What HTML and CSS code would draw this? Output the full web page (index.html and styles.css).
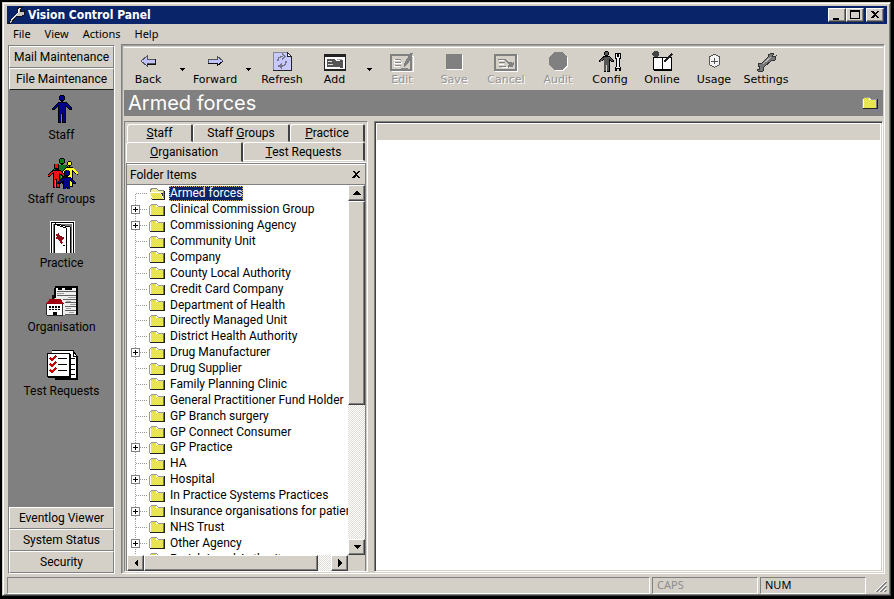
FILE: index.html
```html
<!DOCTYPE html>
<html lang="en">
<head>
<meta charset="utf-8">
<title>Vision Control Panel</title>
<link rel="stylesheet" href="styles.css">
</head>
<body>
<svg class="defs" width="0" height="0" aria-hidden="true">
  <defs>
    <pattern id="dither" width="2" height="2" patternUnits="userSpaceOnUse">
      <rect width="2" height="2" fill="#e3df45"/><rect width="1" height="1" fill="#ecea60"/><rect x="1" y="1" width="1" height="1" fill="#ecea60"/>
    </pattern>
    <symbol id="folder" viewBox="0 0 18 14">
      <path d="M1 12V3l2-2h5l2 2h6v9z" fill="#999"/>
      <path d="M2 12V3l1-1h5l2 2h6v8z" fill="#fff"/>
      <path d="M3 12V4h12v8z" fill="url(#dither)"/><path d="M3 2h5v2H3z" fill="#e3df45"/>
      <path d="M16 3h1v10H2v-1h14z" fill="#222"/><path d="M15 4h1v8h-1z" fill="#777"/>
    </symbol>
    <symbol id="folder-open" viewBox="0 0 18 14">
      <path d="M2 8V2l2-1h4l2 2h6v10H4z" fill="#888"/>
      <path d="M3 8V3l1-1h4l2 2h5v5z" fill="#f0eea0"/>
      <path d="M0 5h12l4 7H4z" fill="#fff"/><path d="M2 6h10l3 6H5z" fill="url(#dither)"/>
      <path d="M16 4h1v9H4v-1h12z" fill="#222"/><path d="M13 6h2v4z" fill="#333"/>
    </symbol>
    <symbol id="person" viewBox="0 0 20 28">
      <path d="M8 0h4v1h1v4h-1v1h-1v1h3l6 6v2h-2l-4-3v16h-4v-9h-1v9H6V12l-4 3H0v-2l6-6h3V6H8V5H7V1h1z" fill="#000"/>
      <path d="M8 1h4v4H8zM7 8h7l5 5v1h-1l-5-4v17h-2v-9H9v9H7V10l-5 4H1v-1z" fill="currentColor"/>
    </symbol>
  </defs>
</svg>
<div class="window">
  <header class="title-bar">
    <svg class="app-icon" viewBox="0 0 18 18"><path d="m2 15 7-7V3l3-2h3l-3 3 1 2 4-1-1 4-4 2-3-1-6 7H1z" fill="#c8c8c0" stroke="#111"/><path d="m3 14 7-7V4l2-2" fill="none" stroke="#fff"/></svg>
    <h1>Vision Control Panel</h1>
    <button class="raised caption" aria-label="Minimise"><svg viewBox="0 0 14 12"><path d="M3 9h6v2H3z"/></svg></button>
    <button class="raised caption" aria-label="Maximise"><svg viewBox="0 0 14 12"><path fill-rule="evenodd" d="M2 1h10v9H2zM3 3v6h8V3z"/></svg></button>
    <button class="raised caption close" aria-label="Close"><svg viewBox="0 0 14 12"><path d="M3 2h2l2 2 2-2h2L8 5.500 11 9H9L7 7 5 9H3l3-3.500z"/></svg></button>
  </header>
  <nav class="menu"><button>File</button><button>View</button><button>Actions</button><button>Help</button></nav>
  <div class="body">
    <aside class="outlook">
      <button class="group">Mail Maintenance</button>
      <button class="group open">File Maintenance</button>
      <div class="shortcuts">
        <button><svg class="big navy" viewBox="0 0 32 32"><use href="#person" x="6" y="2" width="20" height="28"/></svg>Staff</button>
        <button><svg class="big" viewBox="0 0 34 34">
          <use href="#person" class="green" x="7" y="1" width="20" height="28"/>
          <use href="#person" class="yellow" x="15" y="4" width="20" height="28"/>
          <use href="#person" class="red" x="1" y="7" width="20" height="26"/>
          <use href="#person" class="navy" x="12" y="14" width="20" height="28"/></svg>Staff Groups</button>
        <button><svg class="big" viewBox="0 0 32 32"><path d="M4 32V0h25v32z" fill="#fff"/><path d="M5.500 32V1.500h22V32" fill="none" stroke="#000"/><path d="M7 32V3h19v29z" fill="#777"/><path d="M10 3l14 3v26h-3z" fill="#fff" stroke="#000"/><path d="M8 3l12 4v25H8z" fill="#fff" stroke="#000"/><path d="m10 13 3-1 1 3 4 1v2l-2 1 1 3-2 1-2-4-3-1v-2h1z" fill="#910c18"/><path d="M17 24h2v1h-2z"/></svg>Practice</button>
        <button><svg class="big" viewBox="0 0 34 32"><path d="M10 0h24v31H10z" fill="#eee"/><path d="M10 1h24M33 1v30M10 2v11M13 3h4m3 0h8" stroke="#000" stroke-width="2"/><path d="M12 6h20M12 10h20M18 14h14M20 18h12M20 22h12M20 26h12M20 30h12" stroke="#555"/><path d="M12 8h7M23 12h9M21 16h6M25 20h7M21 24h6M24 28h6" stroke="#999"/><path d="M1 18h17v13H1z" fill="#fff" stroke="#222"/><path d="M0 19l4-5h12l3 5z" fill="#a00010"/><path d="M6 10h2v4H6z" fill="#111"/><path d="M3 21h5v5H3zM10 21h5v5h-5zM7 28h5v3H7z"/><path d="M5.500 21v5M12.500 21v5M3 23.500h12" stroke="#fff"/></svg>Organisation</button>
        <button><svg class="big" viewBox="0 0 32 32"><path d="M6 1.500h21l4 6v23H9" fill="#fff" stroke="#000"/><path d="M27 2v5h4" fill="none" stroke="#000"/><path d="M30 8h1v23H9v-2h21z"/><path d="M1.500 4.500h22v23h-22z" fill="#fff" stroke="#000"/><path d="M23 5h2v24H2v-1h21z"/><path d="M12 9.500h9M12 15.500h9M12 21.500h9M25 9.500h4M25 15.500h4M25 20.500h4M25 25.500h4" stroke="#000"/><path d="m4 9 2 2 4-4M4 15l2 2 4-4M4 21l2 2 4-4" fill="none" stroke="#c60000" stroke-width="2"/></svg>Test Requests</button>
      </div>
      <button class="group">Eventlog Viewer</button>
      <button class="group">System Status</button>
      <button class="group">Security</button>
    </aside>
    <main>
      <div class="toolbar">
        <button class="tool back"><svg viewBox="0 0 24 22"><path d="m5 10 6-5v3h8v4h-8v3z" fill="#c0c3ff" stroke="#555"/><path d="M11 13h8V8" fill="none" stroke="#111"/></svg>Back</button>
        <button class="drop" aria-label="Back history"><svg viewBox="0 0 5 3"><path d="M0 0h5L3 3H2z"/></svg></button>
        <button class="tool forward"><svg viewBox="0 0 24 22"><path d="m20 10-6-5v3H5v4h9v3z" fill="#c0c3ff" stroke="#555"/><path d="m20 10-6 5v-3H5" fill="none" stroke="#111"/></svg>Forward</button>
        <button class="drop" aria-label="Forward history"><svg viewBox="0 0 5 3"><path d="M0 0h5L3 3H2z"/></svg></button>
        <button class="tool refresh"><svg viewBox="0 0 24 22"><path d="M3 1h14l4 4v14H3z" fill="#c8caff" stroke="#889"/><path d="M17 1v4h4z" fill="#fff" stroke="#222"/><path d="M21 5v14H3" fill="none" stroke="#222"/><path d="M8 9.500q0-4 5-4M12 3l3 2.500-3 2.500M16 10q0 5-5 5M12 12.500 9 15l3 2.500" fill="none" stroke="#778" stroke-width="1.500"/></svg>Refresh</button>
        <button class="tool add"><svg viewBox="0 0 24 22"><path d="M1 4h21v15H1z" fill="#fff" stroke="#222"/><path d="M1 3h22v3H1zM2 18h21v2H2z" fill="#222"/><path d="M4 8h7l2 2 7-1v8l-7-1H4z" fill="#555"/><path d="M5 10.500h4M5 13.500h5" stroke="#ddd"/><path d="M14 8.500h5" stroke="#aaa"/></svg>Add</button>
        <button class="drop narrow" aria-label="Add options"><svg viewBox="0 0 5 3"><path d="M0 0h5L3 3H2z"/></svg></button>
        <button class="tool" disabled><svg viewBox="0 0 24 22"><path d="M2 5h21v15H2z" fill="none" stroke="#fff"/><path d="M1 4h20v15H1z" fill="#d4d0c8" stroke="#808080" stroke-width="2"/><path d="M4 9h6M4 12h8M4 15h6" stroke="#fff" stroke-width="2"/><path d="M5 8h6M5 11h6M5 14h6M11 17h7" stroke="#888"/><path d="m14 13 6-11h3l-5 11-4 3z" fill="#808080"/></svg>Edit</button>
        <button class="tool" disabled><svg viewBox="0 0 24 22"><path d="M5 4h16v15H5z" fill="#fff"/><path d="M4 3h16v15H4z" fill="#808080"/></svg>Save</button>
        <button class="tool" disabled><svg viewBox="0 0 24 22"><path d="M2 5h21v15H2z" fill="none" stroke="#fff" stroke-width="2"/><path d="M1 4h21v15H1z" fill="#d4d0c8" stroke="#808080" stroke-width="2"/><path d="M5 9.500h5M5 13.500h5M8 16.500h8" stroke="#fff"/><path d="M4 8.500h7l3 3h4M5 11.500h6M5 15.500h7" stroke="#808080" fill="none"/><path d="m15 12 4 4m1-4-6 4" stroke="#808080" stroke-width="2"/></svg>Cancel</button>
        <button class="tool" disabled><svg viewBox="0 0 24 22"><path d="M9 2h8l5 5v8l-5 5H9l-4-5V7z" fill="#fff"/><path d="M8 1h8l5 5v8l-5 5H8l-5-5V6z" fill="#808080"/></svg>Audit</button>
        <button class="tool"><svg class="grey" viewBox="0 0 24 22"><use href="#person" x="1" y="0" width="15" height="21"/><path d="M17.500 2.500h5v5h-1v8l1 1v3h-1v-2h-3v2h-1v-3l1-1v-8h-1z" fill="#eee" stroke="#000"/><path d="M19 3h2v3h-2z" fill="#000"/></svg>Config</button>
        <button class="tool"><svg viewBox="0 0 24 22"><path d="M3.500 6.500h18v12h-18z" fill="#fff" stroke="#000"/><path d="M12 7h1v12h-1zM4 19h18v1H4z"/><path d="M4 0h3l2 2v2L7 6H4L2 4V2z" fill="#444"/><path d="m14 11 8-8" stroke="#222" stroke-width="2"/></svg>Online</button>
        <button class="tool"><svg viewBox="0 0 24 22"><path d="m12.500 3.500 5 2v8l-5 3-5-3v-8z" fill="#f4f4f4" stroke="#555"/><path d="M12.500 7v6M9 10.500h7" stroke="#555"/></svg>Usage</button>
        <button class="tool"><svg viewBox="0 0 24 22"><path d="m4 13 4-1 6-6V4l4-2 2 1-2 2 1 1 3-1-1 4-4 1-7 6-1 4-4 1-2-2 3-1z" fill="#777" stroke="#333"/><path d="m9 13 8-7" stroke="#bbb"/></svg>Settings</button>
      </div>
      <div class="heading"><h2>Armed forces</h2><svg class="folder" viewBox="0 0 18 14"><use href="#folder"/></svg></div>
      <div class="panes">
        <section class="navigator">
          <div class="tabs" role="tablist">
            <div class="tab-row back-row">
              <button role="tab" class="t-staff"><u>S</u>taff</button><button role="tab" class="t-groups">Staff <u>G</u>roups</button><button role="tab" class="t-practice"><u>P</u>ractice</button>
            </div>
            <div class="tab-row front-row">
              <button role="tab" class="t-org" aria-selected="true"><u>O</u>rganisation</button><button role="tab" class="t-test"><u>T</u>est Requests</button>
            </div>
          </div>
          <div class="items">
            <div class="items-head"><h3>Folder Items</h3><button aria-label="Close folder items"><svg viewBox="0 0 10 9"><path d="M1 1h2l2 2 2-2h2L6 4l3 4H7L5 6 3 8H1l3-4z"/></svg></button></div>
            <div class="view">
              <ul class="tree" id="tree"></ul>
              <div class="vscroll"><button class="raised" aria-label="Scroll up"><svg viewBox="0 0 8 4"><path d="M3 0h1l4 4H0z"/></svg></button><div class="raised vthumb"></div><button class="raised" aria-label="Scroll down"><svg viewBox="0 0 8 4"><path d="M0 0h8L4 4z"/></svg></button></div>
            </div>
            <div class="hscroll"><button class="raised" aria-label="Scroll left"><svg class="side" viewBox="0 0 4 8"><path d="M4 0v8L0 4z"/></svg></button><div class="raised hthumb"></div><button class="raised" aria-label="Scroll right"><svg class="side" viewBox="0 0 4 8"><path d="M0 0v8l4-4z"/></svg></button></div>
          </div>
        </section>
        <section class="detail"><div class="detail-head"></div></section>
      </div>
    </main>
  </div>
  <footer class="status"><div class="cell message"></div><div class="cell off">CAPS</div><div class="cell">NUM</div><svg class="grip" viewBox="0 0 12 12"><path d="M1 11 11 1M5 11l6-6M9 11l2-2" stroke="#808080" stroke-width="2"/><path d="M0 11 11 0M4 11l7-7M8 11l3-3" stroke="#fff"/></svg></footer>
</div>
<script src="tree.js"></script>
</body>
</html>
```
FILE: styles.css
```css
* { box-sizing: border-box; }
body { margin: 0; height: 100vh; padding: 2px 3px 3px 2px; background: #000; color: #000; font: 12px/14px Roboto, sans-serif; overflow: hidden; }
button { margin: 0; padding: 0; border: 0; background: transparent; color: inherit; font: inherit; white-space: nowrap; }
h1, h2, h3, ul { margin: 0; padding: 0; font-weight: normal; }
svg { display: block; flex: none; shape-rendering: crispEdges; }
.defs { position: absolute; }
.navy { color: #00008b; } .green { color: #087b15; } .yellow { color: #ffff20; } .red { color: #f01010; } .grey { color: #555; }
.raised { background: #d4d0c8; border: 1px solid; border-color: #fff #404040 #404040 #fff; box-shadow: inset -1px -1px #808080; display: flex; align-items: center; justify-content: center; flex: none; }

.window { height: 100%; display: flex; flex-direction: column; background: #d4d0c8; border: 1px solid; border-color: #d4d0c8 #404040 #404040 #d4d0c8; box-shadow: inset 1px 1px #fff, inset -1px -1px #808080; padding: 3px 3px 1px 4px; }
.title-bar { flex: none; display: flex; align-items: center; height: 18px; padding-right: 3px; background: #0a246a; color: #fff; }
.title-bar h1 { flex: 1; font: bold 12px/16px "DejaVu Sans Condensed", "DejaVu Sans", sans-serif; }
.app-icon { width: 18px; height: 18px; margin: 0 2px 0 1px; }
.caption { width: 18px; height: 14px; }
.caption svg { width: 14px; height: 12px; }
.caption.close { margin-left: 2px; }
.menu { flex: none; height: 20px; display: flex; align-items: center; gap: 14px; padding-left: 6px; font: 11px/14px "Noto Sans", sans-serif; }

.body { flex: 1; min-height: 0; display: flex; gap: 6px; padding: 0 2px 0 1px; }
.outlook { flex: none; width: 107px; display: flex; flex-direction: column; margin-top: 1px; border: 1px solid; border-color: #808080 #fff #fff #808080; }
.group { flex: none; height: 22px; background: #d4d0c8; border: 1px solid; border-color: #fff #808080 #808080 #fff; }
.group.open { border-bottom-color: #202020; }
.shortcuts { flex: 1; min-height: 0; background: #808080; padding-top: 3px; display: flex; flex-direction: column; }
.shortcuts button { height: 64px; display: flex; flex-direction: column; align-items: center; justify-content: flex-start; gap: 3px; }
.big { width: 32px; height: 32px; }

main { flex: 1; min-width: 0; display: flex; flex-direction: column; border: 1px solid; border-color: #808080 #fff #fff #808080; box-shadow: inset 1px 1px #a0a0a0; padding: 2px 1px 1px 2px; }
.toolbar { flex: none; display: flex; height: 43px; border-top: 1px solid #fff; font: 11px/14px "DejaVu Sans", sans-serif; }
.tool { width: 52px; display: flex; flex-direction: column; align-items: center; padding-top: 3px; flex: none; }
.tool svg { width: 24px; height: 22px; }
.tool:disabled { color: #949494; text-shadow: 1px 1px #fff; }
.back, .refresh { width: 48px; } .forward { width: 46px; } .add { width: 57px; }
.drop { width: 20px; display: flex; align-items: center; justify-content: center; flex: none; }
.drop.narrow { width: 13px; }
.drop svg { width: 5px; height: 3px; }
.heading { flex: none; height: 26px; display: flex; align-items: center; justify-content: space-between; padding: 0 4px; background: #808080; color: #fff; }
.heading h2 { font: 20px/24px Inter, sans-serif; }
.folder { width: 18px; height: 14px; }

.panes { flex: 1; min-height: 0; display: flex; gap: 6px; padding-top: 5px; }
.navigator { flex: none; width: 244px; display: flex; flex-direction: column; border: 1px solid; border-color: #808080 #fff #fff #808080; padding: 2px 1px 0; }
.tab-row { display: flex; align-items: flex-end; padding: 0 1px; }
.tab-row button { height: 18px; border: 1px solid; border-color: #fff #404040 transparent #fff; border-right-width: 2px; border-radius: 3px 2px 0 0; }
.t-staff { width: 66px; } .t-groups { width: 97px; } .t-practice { width: 75px; }
.front-row { align-items: flex-start; border-bottom: 1px solid #fff; height: 21px; padding: 0; }
.tab-row .t-org { width: 117px; height: 20px; }
.tab-row .t-test { width: 122px; height: 19px; border-bottom-color: #fff; }
.items { flex: 1; min-height: 0; display: flex; flex-direction: column; border: 1px solid #808080; border-bottom: 0; }
.items-head { flex: none; height: 21px; display: flex; align-items: center; justify-content: space-between; padding: 0 4px 0 3px; border-top: 1px solid #fff; border-bottom: 1px solid #808080; }
.items-head h3 { font-size: 12px; }
.items-head svg { width: 10px; height: 9px; }
.view { flex: 1; min-height: 0; display: flex; background: #fff; overflow: hidden; }
.tree { flex: 1; min-width: 0; height: 382px; padding-top: 1px; display: grid; grid-auto-rows: 1fr; overflow: hidden; list-style: none; }
.tree li { min-height: 0; display: flex; align-items: center; white-space: nowrap; }
.tree .branch { flex: none; align-self: stretch; width: 21px; display: grid; place-items: center start; padding-left: 4px; background: repeating-linear-gradient(90deg, #999 0 1px, transparent 1px 2px) 9px 50% / 11px 1px no-repeat, repeating-linear-gradient(#999 0 1px, transparent 1px 2px) 8px 0 / 1px 100% no-repeat; }
.tree li:first-child .branch { background-size: 11px 1px, 1px 50%; background-position: 9px 50%, 8px 100%; }
.tree .branch svg { width: 9px; height: 9px; }
.tree .label { padding: 0 1px; margin-left: 3px; line-height: 15px; }
.tree .selected { background: #0a246a; color: #fff; outline: 1px dotted #d8b66a; outline-offset: -1px; }
.vscroll, .hscroll { flex: none; display: flex; background: repeating-conic-gradient(#fff 0 25%, #dedbd5 0 50%) 0 0 / 2px 2px; }
.vscroll { width: 17px; flex-direction: column; }
.vscroll button { height: 16px; } .vscroll button:last-child { margin-top: auto; }
.vscroll svg { width: 8px; height: 4px; }
.vthumb { height: 204px; }
.hscroll { height: 16px; border-right: 17px solid #d4d0c8; }
.hscroll button { width: 17px; } .hscroll button:last-child { margin-left: auto; }
.hscroll .side { width: 4px; height: 8px; }
.hthumb { width: 174px; }
.detail { flex: 1; min-width: 0; background: #fff; border: 1px solid; border-color: #808080 #fff #fff #808080; box-shadow: inset 1px 1px #404040, inset -1px -1px #d4d0c8; padding: 2px; }
.detail-head { height: 16px; background: #d4d0c8; }

.status { flex: none; display: flex; gap: 2px; height: 20px; padding-top: 3px; font: 11px/14px "Noto Sans", sans-serif; }
.cell { width: 106px; padding-left: 4px; border: 1px solid; border-color: #808080 #fff #fff #808080; }
.message { flex: 1; }
.off { color: #8c8c8c; }
.grip { width: 12px; height: 12px; margin: 4px 0 0 7px; }
```
FILE: tree.js
```js
// Folder names; a leading "+" marks a collapsed folder with children.
const folders = [
  "Armed forces", "+Clinical Commission Group", "+Commissioning Agency", "Community Unit",
  "Company", "County Local Authority", "Credit Card Company", "Department of Health",
  "Directly Managed Unit", "District Health Authority", "+Drug Manufacturer", "Drug Supplier",
  "Family Planning Clinic", "General Practitioner Fund Holder", "GP Branch surgery",
  "GP Connect Consumer", "+GP Practice", "HA", "+Hospital", "In Practice Systems Practices",
  "+Insurance organisations for patients", "NHS Trust", "+Other Agency", "Parish Local Authority"
];
const plus = '<svg viewBox="0 0 9 9"><path d="M0 0h9v9H0z" fill="#808080"/><path d="M1 1h7v7H1z" fill="#fff"/><path d="M2 4h5v1H2zM4 2h1v5H4z"/></svg>';
document.getElementById("tree").innerHTML = folders.map((entry, i) => {
  const parent = entry[0] === "+";
  const name = parent ? entry.slice(1) : entry;
  const icon = i === 0 ? "folder-open" : "folder";
  return `<li><span class="branch">${parent ? plus : ""}</span><svg class="folder" viewBox="0 0 18 14"><use href="#${icon}"/></svg><span class="label${i === 0 ? " selected" : ""}">${name}</span></li>`;
}).join("");
```
